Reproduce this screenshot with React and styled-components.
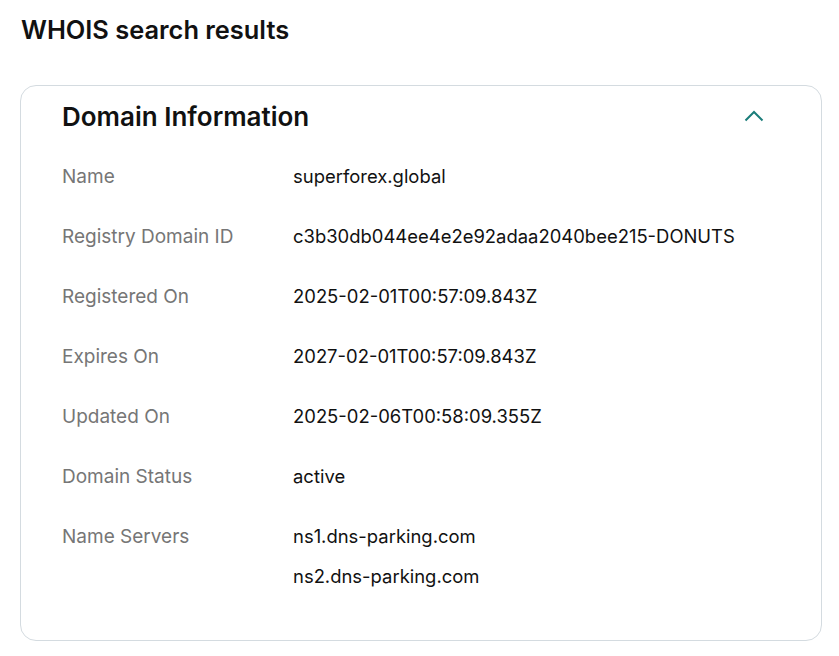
import styled, { createGlobalStyle } from 'styled-components';

const GlobalStyle = createGlobalStyle`
  body {
    margin: 0;
    background: #fff;
    font-family: Inter, "Noto Sans", sans-serif;
    color: #111;
  }
`;

const Page = styled.div`
  padding: 14px 17px 16px 20px;
`;

const Title = styled.h1`
  margin: 0 0 39px 1px;
  font-size: 25.4px;
  line-height: 32px;
  font-weight: 600;
  color: #111;
`;

const Card = styled.section`
  border: 1px solid #d4dbe0;
  border-radius: 16px;
  padding: 0 57px 35px 41px;
`;

const Header = styled.div`
  display: flex;
  align-items: center;
  justify-content: space-between;
  height: 60px;
`;

const CardTitle = styled.h2`
  margin: 0;
  font-size: 26px;
  font-weight: 600;
  color: #111;
`;

const Toggle = styled.button`
  border: 0;
  background: none;
  padding: 0;
  display: flex;
  color: #1b7d7a;
  cursor: pointer;
`;

const Row = styled.div`
  display: grid;
  grid-template-columns: 231px 1fr;
  align-items: baseline;
  padding: 20px 0 19px;
  line-height: 20px;
`;

const Label = styled.div`
  font-size: 19px;
  color: #767676;
`;

const Values = styled.div`
  display: flex;
  flex-direction: column;
  gap: 20px;
  font-size: 18.45px;
  color: #111;
`;

const rows = [
  ['Name', ['superforex.global']],
  ['Registry Domain ID', ['c3b30db044ee4e2e92adaa2040bee215-DONUTS']],
  ['Registered On', ['2025-02-01T00:57:09.843Z']],
  ['Expires On', ['2027-02-01T00:57:09.843Z']],
  ['Updated On', ['2025-02-06T00:58:09.355Z']],
  ['Domain Status', ['active']],
  ['Name Servers', ['ns1.dns-parking.com', 'ns2.dns-parking.com']],
];

export default function App() {
  return (
    <Page>
      <GlobalStyle />
      <Title>WHOIS search results</Title>
      <Card>
        <Header>
          <CardTitle>Domain Information</CardTitle>
          <Toggle aria-label="Collapse">
            <svg width="20" height="12" viewBox="0 0 20 12" fill="none">
              <path d="M1.5 10.5 L10 2 L18.5 10.5" stroke="currentColor" strokeWidth="2" />
            </svg>
          </Toggle>
        </Header>
        {rows.map(([label, values]) => (
          <Row key={label}>
            <Label>{label}</Label>
            <Values>
              {values.map(v => <span key={v}>{v}</span>)}
            </Values>
          </Row>
        ))}
      </Card>
    </Page>
  );
}
